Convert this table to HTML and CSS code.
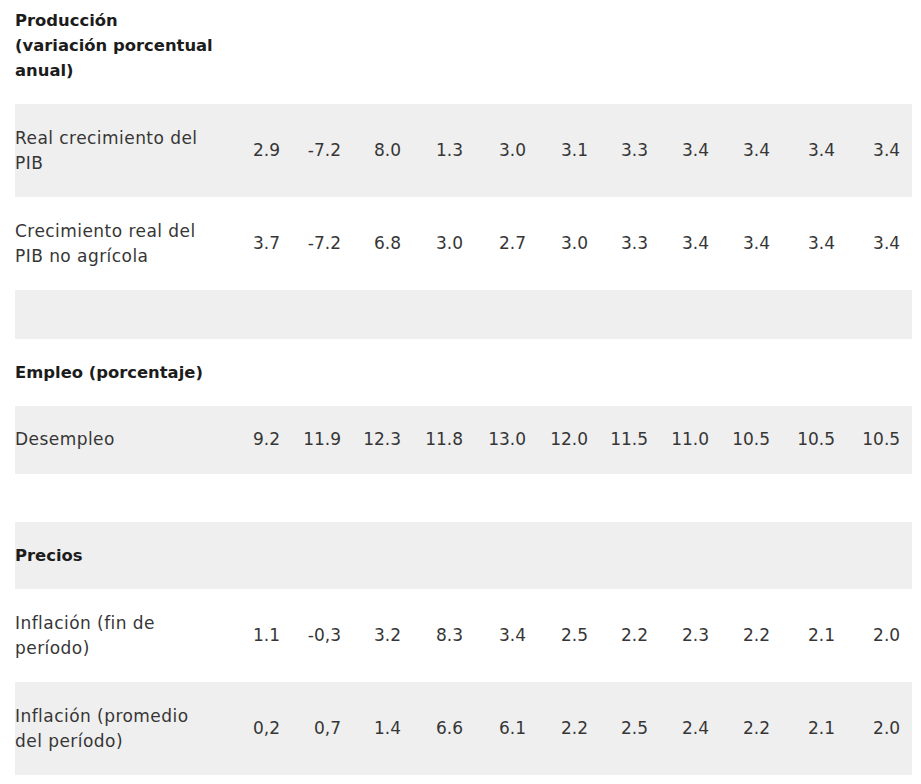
FILE: index.html
```html
<!DOCTYPE html>
<html lang="es">
<head>
<meta charset="utf-8">
<title>Indicadores</title>
<link rel="stylesheet" href="styles.css">
</head>
<body>
<table class="data">
  <colgroup>
    <col class="c-label">
    <col class="c60"><col class="c61"><col class="c60"><col class="c62"><col class="c63"><col class="c62">
    <col class="c60"><col class="c61"><col class="c61"><col class="c65"><col class="c65">
  </colgroup>
  <tbody>
    <tr class="head first"><th colspan="12">Producción<br>(variación porcentual<br>anual)</th></tr>
    <tr><td class="label">Real crecimiento del<br>PIB</td><td>2.9</td><td>-7.2</td><td>8.0</td><td>1.3</td><td>3.0</td><td>3.1</td><td>3.3</td><td>3.4</td><td>3.4</td><td>3.4</td><td>3.4</td></tr>
    <tr><td class="label">Crecimiento real del<br>PIB no agrícola</td><td>3.7</td><td>-7.2</td><td>6.8</td><td>3.0</td><td>2.7</td><td>3.0</td><td>3.3</td><td>3.4</td><td>3.4</td><td>3.4</td><td>3.4</td></tr>
    <tr class="spacer"><td colspan="12"></td></tr>
    <tr class="head"><th colspan="12">Empleo (porcentaje)</th></tr>
    <tr><td class="label">Desempleo</td><td>9.2</td><td>11.9</td><td>12.3</td><td>11.8</td><td>13.0</td><td>12.0</td><td>11.5</td><td>11.0</td><td>10.5</td><td>10.5</td><td>10.5</td></tr>
    <tr class="spacer"><td colspan="12"></td></tr>
    <tr class="head"><th colspan="12">Precios</th></tr>
    <tr><td class="label">Inflación (fin de<br>período)</td><td>1.1</td><td>-0,3</td><td>3.2</td><td>8.3</td><td>3.4</td><td>2.5</td><td>2.2</td><td>2.3</td><td>2.2</td><td>2.1</td><td>2.0</td></tr>
    <tr><td class="label">Inflación (promedio<br>del período)</td><td>0,2</td><td>0,7</td><td>1.4</td><td>6.6</td><td>6.1</td><td>2.2</td><td>2.5</td><td>2.4</td><td>2.2</td><td>2.1</td><td>2.0</td></tr>
  </tbody>
</table>
</body>
</html>
```

FILE: styles.css
```css
html, body {
  margin: 0;
  padding: 0;
  background: #ffffff;
}

body {
  padding: 0 9px 0 15px;
  font-family: "DejaVu Sans", "Liberation Sans", sans-serif;
  font-size: 17px;
  line-height: 25px;
  color: #363636;
}

.data {
  width: 897px;
  table-layout: fixed;
  border-collapse: collapse;
  border-spacing: 0;
}

.c-label { width: 217px; }
.c60 { width: 60px; }
.c61 { width: 61px; }
.c62 { width: 62px; }
.c63 { width: 63px; }
.c65 { width: 65px; }

.data tr:nth-child(even) {
  background: #efefef;
}

.data td {
  padding: 21.5px 12px 21.5px 0;
  text-align: right;
  vertical-align: middle;
  white-space: nowrap;
}

.data td.label {
  text-align: left;
  padding-right: 0;
  letter-spacing: 0.45px;
}

.data th {
  padding: 21px 0;
  text-align: left;
  font-size: 16.4px;
  font-weight: bold;
  color: #1c1c1c;
  line-height: 25px;
}

.data tr.first th {
  padding-top: 8px;
  padding-bottom: 21px;
}

.data tr.spacer td {
  padding: 0;
  height: 48.5px;
}
```
